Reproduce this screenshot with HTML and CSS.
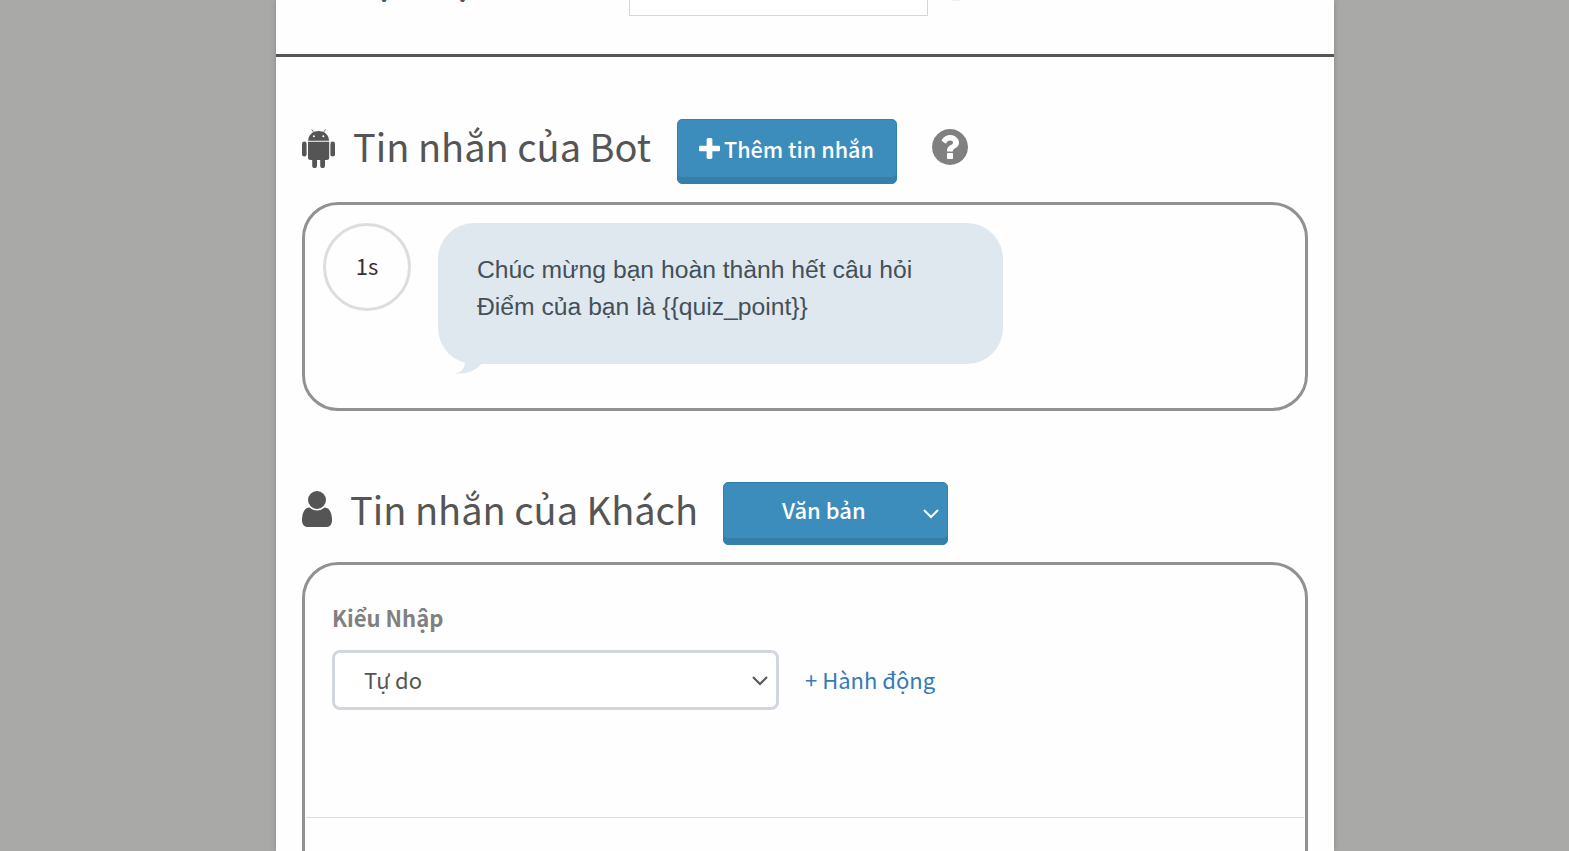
FILE: index.html
```
<!DOCTYPE html>
<html lang="vi">
<head>
    <meta charset="UTF-8">
    <meta name="viewport" content="width=device-width, initial-scale=1.0">
    <title>Tin nhắn</title>
    <link rel="stylesheet" href="styles.css">
</head>
<body>

<div class="modal-box">
    <!-- Top row -->
    <div class="top-row">
        <label class="top-label" for="name">Mặc định</label>
        <input type="text" id="name" class="top-input">
        <span class="top-help"></span>
    </div>

    <!-- Bot -->
    <div class="section-head">
        <svg class="icon-android" viewBox="0 0 33 39">
            <g fill="#555">
                <path d="M6.200 11.800C6.200 6 10.600 2 16.600 2S27 6 27 11.800z"/>
                <rect x="0" y="12.600" width="4.600" height="15" rx="2.300"/>
                <rect x="28.400" y="12.600" width="4.600" height="15" rx="2.300"/>
                <path d="M6 12.800h21.200v15.700q0 2.500-2.500 2.500H23v5.700a2.400 2.400 0 0 1-4.800 0V31h-3.200v5.700a2.400 2.400 0 0 1-4.800 0V31H8.500Q6 31 6 28.500z"/>
                <path d="M9.700.3l2.300 3.600M23.500.3l-2.300 3.600" stroke="#555" stroke-width=".8"/>
            </g>
            <circle cx="11.900" cy="7.300" r="1" fill="#fff"/>
            <circle cx="21.300" cy="7.300" r="1" fill="#fff"/>
        </svg>
        <h2 class="title title-bot">Tin nhắn của Bot</h2>
        <button class="btn btn-add">
            <svg class="icon-plus" viewBox="192 128 1408 1408"><path fill="#fff" d="M1600 736v192q0 40-28 68t-68 28h-416v416q0 40-28 68t-68 28h-192q-40 0-68-28t-28-68v-416h-416q-40 0-68-28t-28-68v-192q0-40 28-68t68-28h416v-416q0-40 28-68t68-28h192q40 0 68 28t28 68v416h416q40 0 68 28t28 68z"/></svg>
            <span>Thêm tin nhắn</span>
        </button>
        <svg class="icon-help" viewBox="128 128 1536 1536"><path fill="#808080" d="M1024 1376v-192q0-14-9-23t-23-9h-192q-14 0-23 9t-9 23v192q0 14 9 23t23 9h192q14 0 23-9t9-23zm256-672q0-88-55.500-163t-138.500-116-170-41q-243 0-371 213-15 24 8 42l132 100q7 6 19 6 16 0 25-12 53-68 86-92 34-24 86-24 48 0 85.500 26t37.500 59q0 38-20 61t-68 45q-63 28-115.500 86.500t-52.500 125.500v36q0 14 9 23t23 9h192q14 0 23-9t9-23q0-19 21.500-49.500t54.500-49.500q32-18 49-28.500t46-35 44.500-48 28-60.500 12.500-81zm384 192q0 209-103 385.500t-279.500 279.500-385.500 103-385.500-103-279.500-279.500-103-385.500 103-385.500 279.500-279.500 385.500-103 385.500 103 279.500 279.500 103 385.500z"/></svg>
    </div>
    <div class="panel panel-bot">
        <div class="delay">1s</div>
        <div class="bubble">
            Chúc mừng bạn hoàn thành hết câu hỏi<br>
            Điểm của bạn là {{quiz_point}}
            <svg class="bubble-tail" viewBox="0 0 32 12"><path fill="#e0e8ef" d="M10 0Q9 9 0 10.700Q18 11.500 26.500 1V0z"/></svg>
        </div>
    </div>

    <!-- Khách -->
    <div class="section-head head-guest">
        <svg class="icon-user" viewBox="256 128 1280 1536"><path fill="#555" d="M1536 1399q0 109-62.500 187t-150.500 78h-854q-88 0-150.500-78t-62.500-187q0-85 8.500-160.500t31.500-152 58.500-131 94-89 134.500-34.500q131 128 313 128t313-128q76 0 134.500 34.500t94 89 58.500 131 31.500 152 8.500 160.500zm-256-887q0 159-112.500 271.500t-271.500 112.500-271.500-112.500-112.500-271.500 112.500-271.500 271.500-112.500 271.500 112.500 112.500 271.500z"/></svg>
        <h2 class="title title-guest">Tin nhắn của Khách</h2>
        <button class="btn btn-type">
            <span class="type-text">Văn bản</span>
            <svg class="chevron chevron-white" viewBox="0 0 16 10"><path d="M1 1l7 7 7-7" fill="none" stroke="#fff" stroke-width="2"/></svg>
        </button>
    </div>
    <div class="panel panel-guest">
        <div class="field-label">Kiểu Nhập</div>
        <div class="field-row">
            <div class="select">
                <span>Tự do</span>
                <svg class="chevron" viewBox="0 0 16 10"><path d="M1 1l7 7 7-7" fill="none" stroke="#555" stroke-width="2"/></svg>
            </div>
            <a class="action-link">+ Hành động</a>
        </div>
        <div class="line"></div>
    </div>
</div>

</body>
</html>
```
FILE: styles.css
```
* {
    box-sizing: border-box;
}
body {
    margin: 0;
    height: 851px;
    overflow: hidden;
    background-color: #a9a9a7;
    font-family: "Noto Sans CJK JP", "Noto Sans", sans-serif;
    font-size: 22px;
    color: #333;
}
.modal-box {
    width: 1058px;
    height: 851px;
    margin-left: 276px;
    overflow: hidden;
    background-color: #fefefe;
    box-shadow: 0 0 6px rgba(0, 0, 0, 0.2);
}
.top-row {
    display: flex;
    align-items: flex-end;
    height: 101px;
    margin-top: -44px;
    padding: 0 26px 38px;
    border-bottom: 3px solid #555;
}
.top-label {
    width: 327px;
    padding: 0 0 9px 38px;
    font-size: 38px;
    line-height: 60px;
    letter-spacing: 2.7px;
    color: #555;
}
.top-input {
    width: 299px;
    height: 60px;
    border: 1px solid #d2d6de;
    background-color: #fff;
}
.top-help {
    width: 36px;
    height: 36px;
    margin: 0 0 15px 10px;
    border-radius: 50%;
    background-color: #eee;
}
.section-head {
    display: flex;
    align-items: flex-start;
    margin-top: 62px;
    padding-left: 26px;
}
.title {
    margin: 0;
    font-size: 38px;
    font-weight: 400;
    line-height: 54px;
    white-space: nowrap;
    color: #555;
}
.icon-android {
    width: 33px;
    height: 39px;
    margin-top: 10px;
}
.title-bot {
    width: 324px;
    margin-left: 18px;
}
.btn {
    display: flex;
    align-items: center;
    padding: 0 0 4px;
    border: 1px solid #367fa9;
    border-radius: 5px;
    background-color: #3c8dbc;
    box-shadow: inset 0 -6px 0 #367fa9;
    color: #fff;
    font-family: inherit;
    font-size: 22px;
    font-weight: 500;
    white-space: nowrap;
}
.btn span {
    padding-bottom: 5px;
}
.btn-add {
    width: 220px;
    height: 65px;
    padding-left: 21px;
    font-size: 21.6px;
}
.btn-add span {
    padding-bottom: 3px;
}
.icon-plus {
    width: 21px;
    height: 21px;
    margin: 0 4px 2px 0;
}
.icon-help {
    width: 36px;
    height: 36px;
    margin: 10px 0 0 35px;
}
.panel {
    margin: 18px 26px 0;
    border: 3px solid #919191;
    border-radius: 36px;
}
.panel-bot {
    display: flex;
    align-items: flex-start;
    height: 209px;
    padding: 18px;
}
.delay {
    width: 88px;
    height: 88px;
    border: 3px solid #ddd;
    border-radius: 50%;
    line-height: 78px;
    text-align: center;
}
.bubble {
    position: relative;
    width: 565px;
    height: 141px;
    margin-left: 27px;
    padding: 28px 39px;
    border-radius: 36px;
    background-color: #e0e8ef;
    color: #435059;
    font-family: "Liberation Sans", Arial, sans-serif;
    font-size: 24.7px;
    line-height: 37px;
    white-space: nowrap;
}
.bubble-tail {
    position: absolute;
    left: 17px;
    bottom: -11px;
    width: 32px;
    height: 12px;
}
.head-guest {
    margin-top: 71px;
}
.icon-user {
    width: 30px;
    height: 36px;
    margin-top: 9px;
}
.title-guest {
    width: 373px;
    margin-left: 18px;
    line-height: 53px;
}
.btn-type {
    width: 225px;
    height: 63px;
    padding-left: 58px;
}
.type-text {
    width: 141px;
    text-align: left;
}
.chevron {
    width: 16px;
    height: 10px;
    margin-top: 1px;
}
.chevron-white {
    margin-top: 4px;
}
.panel-guest {
    height: 400px;
    margin-top: 17px;
    padding-top: 34px;
}
.field-label {
    margin-left: 27px;
    line-height: 36px;
    font-weight: 700;
    color: #808080;
}
.field-row {
    display: flex;
    align-items: center;
    margin: 15px 0 0 27px;
}
.select {
    display: flex;
    align-items: center;
    justify-content: space-between;
    width: 447px;
    height: 60px;
    padding: 0 8px 0 29px;
    border: 3px solid #d2d6de;
    border-radius: 8px;
    background-color: #fff;
    color: #555;
}
.select span,
.action-link {
    padding-bottom: 2px;
}
.select span {
    letter-spacing: 0.2px;
}
.action-link {
    margin-left: 26px;
    color: #337ab7;
}
.line {
    margin: 107px 1px 0;
    border-top: 1px solid #ddd;
}
```
